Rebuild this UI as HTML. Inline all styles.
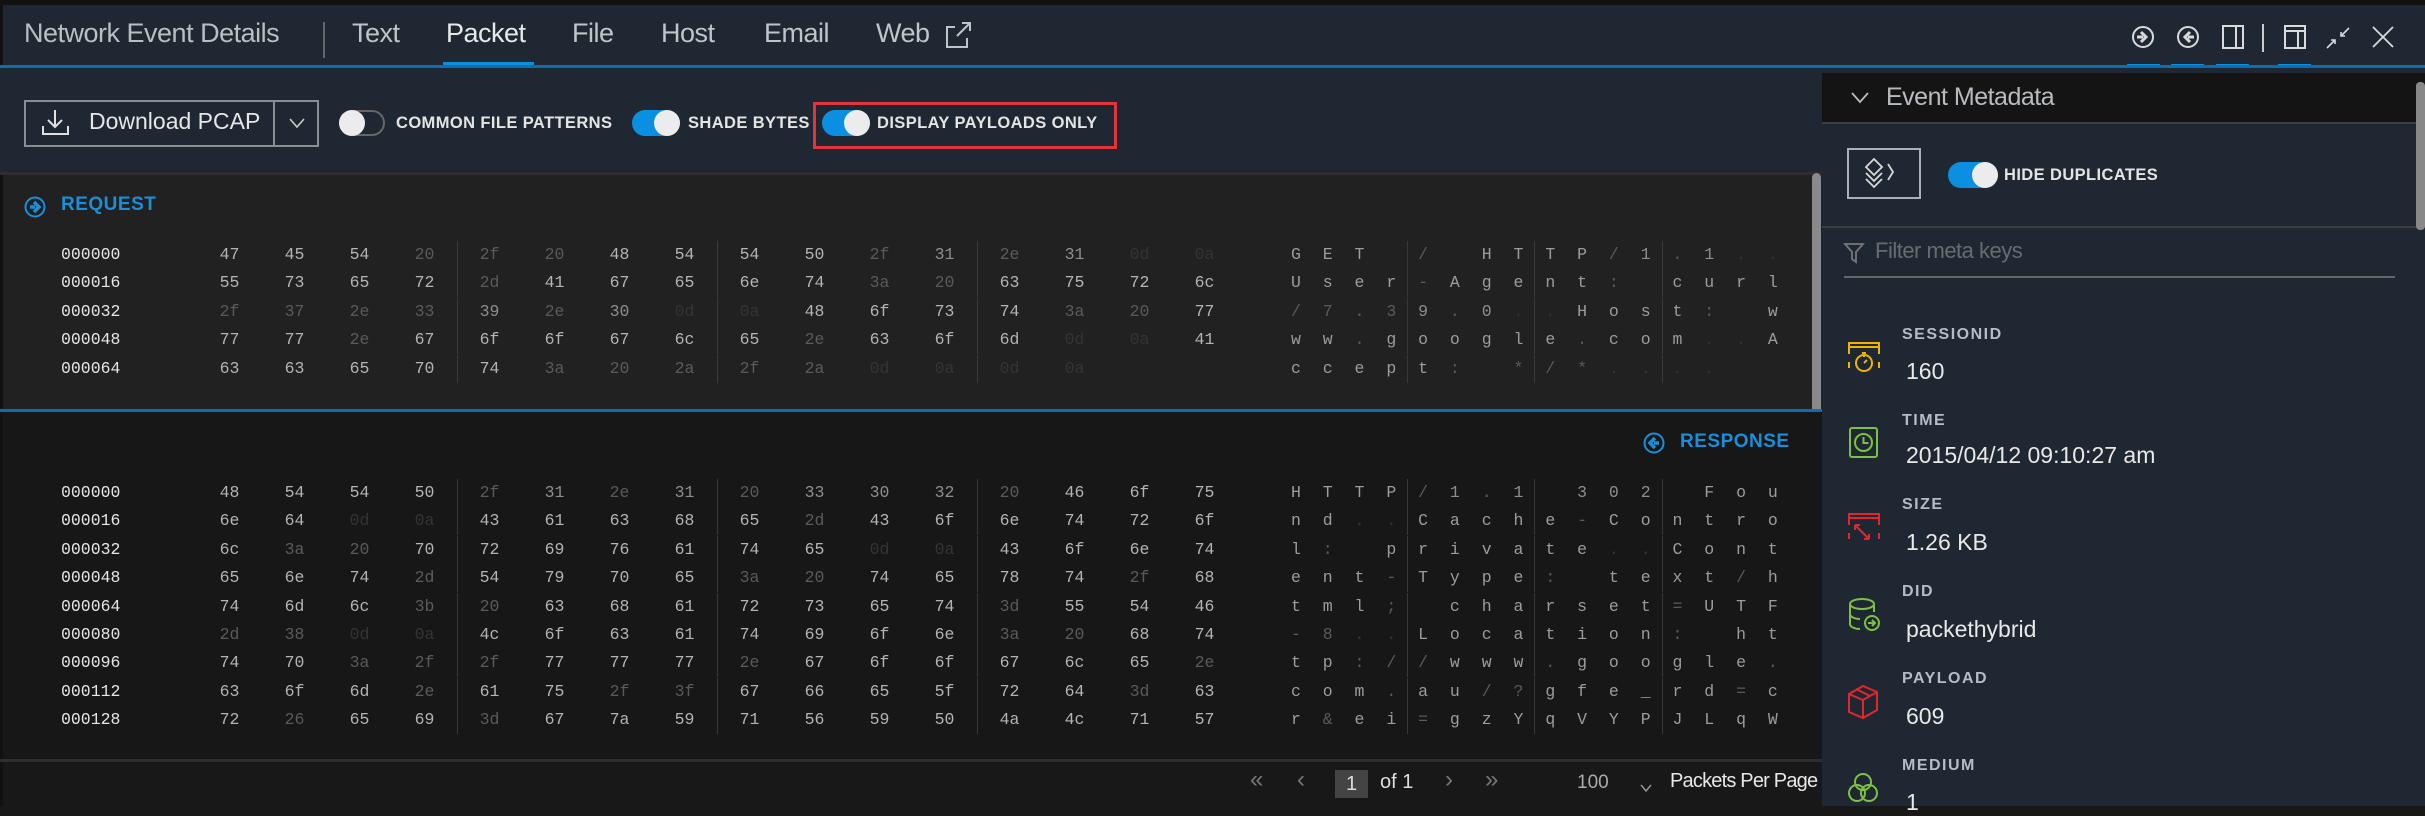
<!DOCTYPE html>
<html><head><meta charset="utf-8"><style>
*{margin:0;padding:0;box-sizing:border-box}
body{width:2425px;height:806px;background:#181818;position:relative;overflow:hidden;font-family:"Liberation Sans",sans-serif}
.abs{position:absolute}
#top{left:0;top:0;width:2425px;height:5px;background:#111}
#hdr{left:0;top:5px;width:2425px;height:61px;background:#1f2832}
#hline{left:0;top:65px;width:2425px;height:3px;background:#0a6fb0}
.tab{position:absolute;top:18px;font-size:27px;color:#bfc4c9;letter-spacing:-0.5px}
#tb{left:0;top:68px;width:1822px;height:104px;background:#1f2832}
#sep1{left:0;top:172px;width:1822px;height:3px;background:#2e2e2e}
#req{left:3px;top:175px;width:1819px;height:235px;background:#212121}
#rline{left:0;top:409px;width:1822px;height:3px;background:#0a6fb0}
#resp{left:3px;top:412px;width:1819px;height:348px;background:#171717}
#pline{left:0;top:759px;width:1822px;height:3px;background:#2e2e2e}
.lbl{position:absolute;font-weight:bold;font-size:16.5px;color:#e4e4e4;letter-spacing:0.4px}
.row{position:absolute;left:0;height:28px;display:flex;font-family:"Liberation Mono",monospace;font-size:16.5px;line-height:28px}
.off{width:197px;padding-left:61px;color:#e6e6e6}
.g{display:flex;width:260px;height:28px}
.g+.g{box-shadow:inset 1px 0 #383838}
.g i,.ag i{font-style:normal;text-align:center;display:block}
.g i{width:65px}
.a{margin-left:43px;display:flex}
.ag{display:flex;width:127.2px}
.ag+.ag{box-shadow:inset 1px 0 #383838}
.ag i{width:31.8px}
.b{color:#b4b4b4}.m{color:#8e8e8e}.d{color:#5a5a5a}.z{color:#343434}
.ag .b{color:#9c9c9c}
#rp{left:1822px;top:68px;width:603px;height:738px;background:#1f2832}
.mk{position:absolute;left:1902px;font-weight:bold;font-size:16px;color:#b5bcc4;letter-spacing:1.5px}
.mv{position:absolute;left:1906px;font-size:23px;color:#e8e8e8}
.ic{position:absolute;left:1846px}
</style></head><body>
<div class="abs" id="top"></div>
<div class="abs" id="hdr"></div>
<div class="abs" style="left:0;top:5px;width:3px;height:801px;background:#111"></div>
<div class="tab" style="left:24px;color:#b9bec3;">Network Event Details</div>
<div class="abs" style="left:323px;top:22px;width:2px;height:36px;background:#666"></div>
<div class="tab" style="left:352px">Text</div>
<div class="tab" style="left:446px;color:#e6e9ec">Packet</div>
<div class="tab" style="left:572px">File</div>
<div class="tab" style="left:661px">Host</div>
<div class="tab" style="left:764px">Email</div>
<div class="tab" style="left:876px">Web</div>
<svg class="abs" style="left:943px;top:20px" width="30" height="30" viewBox="0 0 30 30" fill="none" stroke="#bfc4c9" stroke-width="2"><path d="M12 7H4v20h20v-9"/><path d="M14 16L27 3M19 3h8v8"/></svg>
<div class="abs" style="left:443px;top:62px;width:91px;height:5px;background:#0b8fe0"></div>
<svg class="abs" style="left:2128px;top:24px" width="300" height="30" viewBox="0 0 300 30" fill="none" stroke="#d8dadc" stroke-width="2">
<circle cx="15" cy="13" r="10"/><path d="M9 13h6M13 8l5 5-5 5" stroke-width="3"/>
<circle cx="60" cy="13" r="10"/><path d="M66 13h-6M62 8l-5 5 5 5" stroke-width="3"/>
<rect x="95" y="2" width="20" height="22"/><path d="M108 2v22"/>
<path d="M135 -5v33" stroke="#ccc"/>
<rect x="157" y="2" width="20" height="22"/><path d="M157 7h20M170 7v17"/>
<path d="M199 24l8-8M203 16h4v4M221 4l-8 8M217 12h-4v-4" stroke-width="1.6"/>
<path d="M245 3l20 20M265 3l-20 20" stroke-width="1.8"/>
</svg>
<div class="abs" style="left:2127px;top:64px;width:33px;height:4px;background:#0b8fe0"></div>
<div class="abs" style="left:2171px;top:64px;width:33px;height:4px;background:#0b8fe0"></div>
<div class="abs" style="left:2216px;top:64px;width:33px;height:4px;background:#0b8fe0"></div>
<div class="abs" style="left:2278px;top:64px;width:33px;height:4px;background:#0b8fe0"></div>
<div class="abs" id="hline"></div>

<div class="abs" id="tb"></div>
<div class="abs" style="left:24px;top:100px;width:295px;height:47px;border:2px solid #8a8e92"></div>
<div class="abs" style="left:273px;top:100px;width:2px;height:47px;background:#8a8e92"></div>
<svg class="abs" style="left:40px;top:108px" width="34" height="30" viewBox="0 0 34 30" fill="none" stroke="#e0e0e0" stroke-width="2"><path d="M15 2v17M8 12l7 7 7-7"/><path d="M3 18v8h25v-8"/></svg>
<div class="abs" style="left:89px;top:108px;font-size:23px;color:#e6e6e6">Download PCAP</div>
<svg class="abs" style="left:287px;top:115px" width="20" height="16" viewBox="0 0 20 16" fill="none" stroke="#ccc" stroke-width="1.6"><path d="M3 4l7 8 7-8"/></svg>
<svg class="abs" style="left:339px;top:110px" width="46" height="26" viewBox="0 0 46 26"><rect x="1" y="1" width="44" height="24" rx="12" fill="#1f2832" stroke="#666" stroke-width="2"/><circle cx="13" cy="13" r="13" fill="#ececec"/></svg>
<div class="lbl" style="left:396px;top:114px">COMMON FILE PATTERNS</div>
<svg class="abs" style="left:632px;top:110px" width="48" height="26" viewBox="0 0 48 26"><rect x="0" y="0" width="48" height="26" rx="13" fill="#0b8fe0"/><circle cx="35" cy="13" r="13" fill="#ececec"/></svg>
<div class="lbl" style="left:688px;top:114px">SHADE BYTES</div>
<div class="abs" style="left:813px;top:102px;width:304px;height:47px;border:3px solid #e0353a"></div>
<svg class="abs" style="left:822px;top:110px" width="48" height="26" viewBox="0 0 48 26"><rect x="0" y="0" width="48" height="26" rx="13" fill="#0b8fe0"/><circle cx="35" cy="13" r="13" fill="#ececec"/></svg>
<div class="lbl" style="left:877px;top:114px">DISPLAY PAYLOADS ONLY</div>
<div class="abs" id="sep1"></div>

<div class="abs" id="req"></div>
<svg class="abs" style="left:24px;top:196px" width="22" height="22" viewBox="0 0 22 22"><circle cx="11" cy="11" r="9.5" fill="none" stroke="#1a8fd8" stroke-width="2"/><path d="M6 11h5M10 6l5 5-5 5" stroke="#1a8fd8" stroke-width="3.5" fill="none"/></svg>
<div class="abs" style="left:61px;top:194px;font-size:19px;font-weight:bold;color:#1a8fd8;letter-spacing:0.5px">REQUEST</div>

<div class="row" style="top:241px"><span class="off">000000</span><div class="g"><i class="b">47</i><i class="b">45</i><i class="b">54</i><i class="d">20</i></div><div class="g"><i class="d">2f</i><i class="d">20</i><i class="b">48</i><i class="b">54</i></div><div class="g"><i class="b">54</i><i class="b">50</i><i class="d">2f</i><i class="m">31</i></div><div class="g"><i class="d">2e</i><i class="m">31</i><i class="z">0d</i><i class="z">0a</i></div><div class="a"><div class="ag"><i class="b">G</i><i class="b">E</i><i class="b">T</i><i></i></div><div class="ag"><i class="d">/</i><i></i><i class="b">H</i><i class="b">T</i></div><div class="ag"><i class="b">T</i><i class="b">P</i><i class="d">/</i><i class="m">1</i></div><div class="ag"><i class="d">.</i><i class="m">1</i><i class="z">.</i><i class="z">.</i></div></div></div>
<div class="row" style="top:269.4px"><span class="off">000016</span><div class="g"><i class="b">55</i><i class="b">73</i><i class="b">65</i><i class="b">72</i></div><div class="g"><i class="d">2d</i><i class="b">41</i><i class="b">67</i><i class="b">65</i></div><div class="g"><i class="b">6e</i><i class="b">74</i><i class="d">3a</i><i class="d">20</i></div><div class="g"><i class="b">63</i><i class="b">75</i><i class="b">72</i><i class="b">6c</i></div><div class="a"><div class="ag"><i class="b">U</i><i class="b">s</i><i class="b">e</i><i class="b">r</i></div><div class="ag"><i class="d">-</i><i class="b">A</i><i class="b">g</i><i class="b">e</i></div><div class="ag"><i class="b">n</i><i class="b">t</i><i class="d">:</i><i></i></div><div class="ag"><i class="b">c</i><i class="b">u</i><i class="b">r</i><i class="b">l</i></div></div></div>
<div class="row" style="top:297.8px"><span class="off">000032</span><div class="g"><i class="d">2f</i><i class="d">37</i><i class="d">2e</i><i class="d">33</i></div><div class="g"><i class="m">39</i><i class="d">2e</i><i class="m">30</i><i class="z">0d</i></div><div class="g"><i class="z">0a</i><i class="b">48</i><i class="b">6f</i><i class="b">73</i></div><div class="g"><i class="b">74</i><i class="d">3a</i><i class="d">20</i><i class="b">77</i></div><div class="a"><div class="ag"><i class="d">/</i><i class="d">7</i><i class="d">.</i><i class="d">3</i></div><div class="ag"><i class="m">9</i><i class="d">.</i><i class="m">0</i><i class="z">.</i></div><div class="ag"><i class="z">.</i><i class="b">H</i><i class="b">o</i><i class="b">s</i></div><div class="ag"><i class="b">t</i><i class="d">:</i><i></i><i class="b">w</i></div></div></div>
<div class="row" style="top:326.2px"><span class="off">000048</span><div class="g"><i class="b">77</i><i class="b">77</i><i class="d">2e</i><i class="b">67</i></div><div class="g"><i class="b">6f</i><i class="b">6f</i><i class="b">67</i><i class="b">6c</i></div><div class="g"><i class="b">65</i><i class="d">2e</i><i class="b">63</i><i class="b">6f</i></div><div class="g"><i class="b">6d</i><i class="z">0d</i><i class="z">0a</i><i class="b">41</i></div><div class="a"><div class="ag"><i class="b">w</i><i class="b">w</i><i class="d">.</i><i class="b">g</i></div><div class="ag"><i class="b">o</i><i class="b">o</i><i class="b">g</i><i class="b">l</i></div><div class="ag"><i class="b">e</i><i class="d">.</i><i class="b">c</i><i class="b">o</i></div><div class="ag"><i class="b">m</i><i class="z">.</i><i class="z">.</i><i class="b">A</i></div></div></div>
<div class="row" style="top:354.6px"><span class="off">000064</span><div class="g"><i class="b">63</i><i class="b">63</i><i class="b">65</i><i class="b">70</i></div><div class="g"><i class="b">74</i><i class="d">3a</i><i class="d">20</i><i class="d">2a</i></div><div class="g"><i class="d">2f</i><i class="d">2a</i><i class="z">0d</i><i class="z">0a</i></div><div class="g"><i class="z">0d</i><i class="z">0a</i><i></i><i></i></div><div class="a"><div class="ag"><i class="b">c</i><i class="b">c</i><i class="b">e</i><i class="b">p</i></div><div class="ag"><i class="b">t</i><i class="d">:</i><i></i><i class="d">*</i></div><div class="ag"><i class="d">/</i><i class="d">*</i><i class="z">.</i><i class="z">.</i></div><div class="ag"><i class="z">.</i><i class="z">.</i><i></i><i></i></div></div></div>

<div class="abs" style="left:1812px;top:173px;width:9px;height:240px;border-radius:5px;background:#8a8a8a"></div>
<div class="abs" id="rline"></div>
<div class="abs" id="resp"></div>
<svg class="abs" style="left:1643px;top:432px" width="22" height="22" viewBox="0 0 22 22"><circle cx="11" cy="11" r="9.5" fill="none" stroke="#1a8fd8" stroke-width="2"/><path d="M16 11h-5M12 6l-5 5 5 5" stroke="#1a8fd8" stroke-width="3.5" fill="none"/></svg>
<div class="abs" style="left:1680px;top:431px;font-size:19px;font-weight:bold;color:#1a8fd8;letter-spacing:0.5px">RESPONSE</div>

<div class="row" style="top:479px"><span class="off">000000</span><div class="g"><i class="b">48</i><i class="b">54</i><i class="b">54</i><i class="b">50</i></div><div class="g"><i class="d">2f</i><i class="m">31</i><i class="d">2e</i><i class="m">31</i></div><div class="g"><i class="d">20</i><i class="m">33</i><i class="m">30</i><i class="m">32</i></div><div class="g"><i class="d">20</i><i class="b">46</i><i class="b">6f</i><i class="b">75</i></div><div class="a"><div class="ag"><i class="b">H</i><i class="b">T</i><i class="b">T</i><i class="b">P</i></div><div class="ag"><i class="d">/</i><i class="m">1</i><i class="d">.</i><i class="m">1</i></div><div class="ag"><i></i><i class="m">3</i><i class="m">0</i><i class="m">2</i></div><div class="ag"><i></i><i class="b">F</i><i class="b">o</i><i class="b">u</i></div></div></div>
<div class="row" style="top:507.4px"><span class="off">000016</span><div class="g"><i class="b">6e</i><i class="b">64</i><i class="z">0d</i><i class="z">0a</i></div><div class="g"><i class="b">43</i><i class="b">61</i><i class="b">63</i><i class="b">68</i></div><div class="g"><i class="b">65</i><i class="d">2d</i><i class="b">43</i><i class="b">6f</i></div><div class="g"><i class="b">6e</i><i class="b">74</i><i class="b">72</i><i class="b">6f</i></div><div class="a"><div class="ag"><i class="b">n</i><i class="b">d</i><i class="z">.</i><i class="z">.</i></div><div class="ag"><i class="b">C</i><i class="b">a</i><i class="b">c</i><i class="b">h</i></div><div class="ag"><i class="b">e</i><i class="d">-</i><i class="b">C</i><i class="b">o</i></div><div class="ag"><i class="b">n</i><i class="b">t</i><i class="b">r</i><i class="b">o</i></div></div></div>
<div class="row" style="top:535.8px"><span class="off">000032</span><div class="g"><i class="b">6c</i><i class="d">3a</i><i class="d">20</i><i class="b">70</i></div><div class="g"><i class="b">72</i><i class="b">69</i><i class="b">76</i><i class="b">61</i></div><div class="g"><i class="b">74</i><i class="b">65</i><i class="z">0d</i><i class="z">0a</i></div><div class="g"><i class="b">43</i><i class="b">6f</i><i class="b">6e</i><i class="b">74</i></div><div class="a"><div class="ag"><i class="b">l</i><i class="d">:</i><i></i><i class="b">p</i></div><div class="ag"><i class="b">r</i><i class="b">i</i><i class="b">v</i><i class="b">a</i></div><div class="ag"><i class="b">t</i><i class="b">e</i><i class="z">.</i><i class="z">.</i></div><div class="ag"><i class="b">C</i><i class="b">o</i><i class="b">n</i><i class="b">t</i></div></div></div>
<div class="row" style="top:564.2px"><span class="off">000048</span><div class="g"><i class="b">65</i><i class="b">6e</i><i class="b">74</i><i class="d">2d</i></div><div class="g"><i class="b">54</i><i class="b">79</i><i class="b">70</i><i class="b">65</i></div><div class="g"><i class="d">3a</i><i class="d">20</i><i class="b">74</i><i class="b">65</i></div><div class="g"><i class="b">78</i><i class="b">74</i><i class="d">2f</i><i class="b">68</i></div><div class="a"><div class="ag"><i class="b">e</i><i class="b">n</i><i class="b">t</i><i class="d">-</i></div><div class="ag"><i class="b">T</i><i class="b">y</i><i class="b">p</i><i class="b">e</i></div><div class="ag"><i class="d">:</i><i></i><i class="b">t</i><i class="b">e</i></div><div class="ag"><i class="b">x</i><i class="b">t</i><i class="d">/</i><i class="b">h</i></div></div></div>
<div class="row" style="top:592.6px"><span class="off">000064</span><div class="g"><i class="b">74</i><i class="b">6d</i><i class="b">6c</i><i class="d">3b</i></div><div class="g"><i class="d">20</i><i class="b">63</i><i class="b">68</i><i class="b">61</i></div><div class="g"><i class="b">72</i><i class="b">73</i><i class="b">65</i><i class="b">74</i></div><div class="g"><i class="d">3d</i><i class="b">55</i><i class="b">54</i><i class="b">46</i></div><div class="a"><div class="ag"><i class="b">t</i><i class="b">m</i><i class="b">l</i><i class="d">;</i></div><div class="ag"><i></i><i class="b">c</i><i class="b">h</i><i class="b">a</i></div><div class="ag"><i class="b">r</i><i class="b">s</i><i class="b">e</i><i class="b">t</i></div><div class="ag"><i class="d">=</i><i class="b">U</i><i class="b">T</i><i class="b">F</i></div></div></div>
<div class="row" style="top:621px"><span class="off">000080</span><div class="g"><i class="d">2d</i><i class="d">38</i><i class="z">0d</i><i class="z">0a</i></div><div class="g"><i class="b">4c</i><i class="b">6f</i><i class="b">63</i><i class="b">61</i></div><div class="g"><i class="b">74</i><i class="b">69</i><i class="b">6f</i><i class="b">6e</i></div><div class="g"><i class="d">3a</i><i class="d">20</i><i class="b">68</i><i class="b">74</i></div><div class="a"><div class="ag"><i class="d">-</i><i class="d">8</i><i class="z">.</i><i class="z">.</i></div><div class="ag"><i class="b">L</i><i class="b">o</i><i class="b">c</i><i class="b">a</i></div><div class="ag"><i class="b">t</i><i class="b">i</i><i class="b">o</i><i class="b">n</i></div><div class="ag"><i class="d">:</i><i></i><i class="b">h</i><i class="b">t</i></div></div></div>
<div class="row" style="top:649.4px"><span class="off">000096</span><div class="g"><i class="b">74</i><i class="b">70</i><i class="d">3a</i><i class="d">2f</i></div><div class="g"><i class="d">2f</i><i class="b">77</i><i class="b">77</i><i class="b">77</i></div><div class="g"><i class="d">2e</i><i class="b">67</i><i class="b">6f</i><i class="b">6f</i></div><div class="g"><i class="b">67</i><i class="b">6c</i><i class="b">65</i><i class="d">2e</i></div><div class="a"><div class="ag"><i class="b">t</i><i class="b">p</i><i class="d">:</i><i class="d">/</i></div><div class="ag"><i class="d">/</i><i class="b">w</i><i class="b">w</i><i class="b">w</i></div><div class="ag"><i class="d">.</i><i class="b">g</i><i class="b">o</i><i class="b">o</i></div><div class="ag"><i class="b">g</i><i class="b">l</i><i class="b">e</i><i class="d">.</i></div></div></div>
<div class="row" style="top:677.8px"><span class="off">000112</span><div class="g"><i class="b">63</i><i class="b">6f</i><i class="b">6d</i><i class="d">2e</i></div><div class="g"><i class="b">61</i><i class="b">75</i><i class="d">2f</i><i class="d">3f</i></div><div class="g"><i class="b">67</i><i class="b">66</i><i class="b">65</i><i class="b">5f</i></div><div class="g"><i class="b">72</i><i class="b">64</i><i class="d">3d</i><i class="b">63</i></div><div class="a"><div class="ag"><i class="b">c</i><i class="b">o</i><i class="b">m</i><i class="d">.</i></div><div class="ag"><i class="b">a</i><i class="b">u</i><i class="d">/</i><i class="d">?</i></div><div class="ag"><i class="b">g</i><i class="b">f</i><i class="b">e</i><i class="b">_</i></div><div class="ag"><i class="b">r</i><i class="b">d</i><i class="d">=</i><i class="b">c</i></div></div></div>
<div class="row" style="top:706.2px"><span class="off">000128</span><div class="g"><i class="b">72</i><i class="d">26</i><i class="b">65</i><i class="b">69</i></div><div class="g"><i class="d">3d</i><i class="b">67</i><i class="b">7a</i><i class="b">59</i></div><div class="g"><i class="b">71</i><i class="b">56</i><i class="b">59</i><i class="b">50</i></div><div class="g"><i class="b">4a</i><i class="b">4c</i><i class="b">71</i><i class="b">57</i></div><div class="a"><div class="ag"><i class="b">r</i><i class="d">&amp;</i><i class="b">e</i><i class="b">i</i></div><div class="ag"><i class="d">=</i><i class="b">g</i><i class="b">z</i><i class="b">Y</i></div><div class="ag"><i class="b">q</i><i class="b">V</i><i class="b">Y</i><i class="b">P</i></div><div class="ag"><i class="b">J</i><i class="b">L</i><i class="b">q</i><i class="b">W</i></div></div></div>

<div class="abs" id="pline"></div>
<div class="abs" style="left:1250px;top:766px;font-size:24px;color:#777">«</div>
<div class="abs" style="left:1297px;top:766px;font-size:24px;color:#777">‹</div>
<div class="abs" style="left:1335px;top:770px;width:33px;height:28px;background:#444;color:#ddd;font-size:20px;text-align:center;line-height:28px">1</div>
<div class="abs" style="left:1380px;top:771px;font-size:20px;color:#ddd">of 1</div>
<div class="abs" style="left:1445px;top:766px;font-size:24px;color:#777">›</div>
<div class="abs" style="left:1485px;top:766px;font-size:24px;color:#777">»</div>
<div class="abs" style="left:1577px;top:772px;font-size:19px;color:#aaa">100</div>
<svg class="abs" style="left:1639px;top:783px" width="14" height="10" viewBox="0 0 14 10" fill="none" stroke="#999" stroke-width="1.4"><path d="M2 2l5 6 5-6"/></svg>
<div class="abs" style="left:1670px;top:770px;font-size:20px;color:#e8e8e8;letter-spacing:-0.8px">Packets Per Page</div>

<div class="abs" id="rp"></div>
<div class="abs" style="left:1822px;top:73px;width:603px;height:49px;background:#141414"></div>
<div class="abs" style="left:1822px;top:122px;width:603px;height:2px;background:#3a3f44"></div>
<svg class="abs" style="left:1849px;top:90px" width="22" height="16" viewBox="0 0 22 16" fill="none" stroke="#bbb" stroke-width="1.8"><path d="M3 3l8 9 8-9"/></svg>
<div class="abs" style="left:1886px;top:83px;font-size:25px;color:#b8bcc0;letter-spacing:-0.5px">Event Metadata</div>
<div class="abs" style="left:1847px;top:148px;width:74px;height:51px;border:2px solid #aab0b5"></div>
<svg class="abs" style="left:1862px;top:156px" width="44" height="36" viewBox="0 0 44 36" fill="none" stroke="#d8d8d8" stroke-width="1.8"><path d="M12 3l8 8-8 8-8-8z"/><path d="M4 17l8 8 8-8M4 23l8 8 8-8"/><path d="M26 8l5 8-5 8"/></svg>
<svg class="abs" style="left:1948px;top:162px" width="50" height="26" viewBox="0 0 50 26"><rect x="0" y="0" width="50" height="26" rx="13" fill="#0b8fe0"/><circle cx="37" cy="13" r="13" fill="#ececec"/></svg>
<div class="lbl" style="left:2004px;top:166px">HIDE DUPLICATES</div>
<div class="abs" style="left:1822px;top:226px;width:603px;height:2px;background:#3a3f44"></div>
<div class="abs" style="left:2416px;top:82px;width:9px;height:148px;border-radius:4px;background:#888"></div>
<svg class="abs" style="left:1843px;top:242px" width="24" height="22" viewBox="0 0 24 22" fill="none" stroke="#777" stroke-width="1.8"><path d="M2 2h18l-7 8v10l-4-3v-7z"/></svg>
<div class="abs" style="left:1875px;top:238px;font-size:22px;color:#676c71;letter-spacing:-0.5px">Filter meta keys</div>
<div class="abs" style="left:1844px;top:276px;width:551px;height:2px;background:#666"></div>

<svg class="ic" style="top:340px" width="36" height="34" viewBox="0 0 36 34" fill="none" stroke="#f0b400" stroke-width="2"><path d="M3 14V3h30v11M3 22v6M33 22v6M3 7h30"/><circle cx="18" cy="23" r="8"/><path d="M16 13h4M18 15v2M18 23l3-3"/></svg>
<div class="mk" style="top:326px">SESSIONID</div><div class="mv" style="top:358px">160</div>
<svg class="ic" style="top:426px" width="36" height="34" viewBox="0 0 36 34" fill="none" stroke="#7cc142" stroke-width="2"><rect x="4" y="2" width="27" height="29" rx="2"/><circle cx="17.5" cy="16.5" r="8.5"/><path d="M17.5 11v6h5"/></svg>
<div class="mk" style="top:412px">TIME</div><div class="mv" style="top:442px">2015/04/12 09:10:27 am</div>
<svg class="ic" style="top:511px" width="36" height="34" viewBox="0 0 36 34" fill="none" stroke="#e3262c" stroke-width="2"><path d="M3 14V3h30v11M3 22v6M33 22v6M3 7h30M9 14l14 14M9 14h5M9 14v5M23 28h-5M23 28v-5"/></svg>
<div class="mk" style="top:496px">SIZE</div><div class="mv" style="top:529px">1.26 KB</div>
<svg class="ic" style="top:597px" width="36" height="36" viewBox="0 0 36 36" fill="none" stroke="#7cc142" stroke-width="2"><ellipse cx="16" cy="7" rx="12" ry="5"/><path d="M4 7v20c0 3 5 5 10 5M28 7v8M4 17c0 3 5 5 10 5"/><circle cx="26" cy="26" r="7"/><path d="M22 26h7M26 23l3 3-3 3"/></svg>
<div class="mk" style="top:583px">DID</div><div class="mv" style="top:616px">packethybrid</div>
<svg class="ic" style="top:684px" width="36" height="36" viewBox="0 0 36 36" fill="none" stroke="#e3262c" stroke-width="2"><path d="M17 2l14 6v18l-14 8-14-6V10z"/><path d="M3 10l14 6 14-8M17 16v18M10 5l14 7"/></svg>
<div class="mk" style="top:670px">PAYLOAD</div><div class="mv" style="top:703px">609</div>
<svg class="ic" style="top:772px" width="36" height="34" viewBox="0 0 36 34" fill="none" stroke="#7cc142" stroke-width="2"><circle cx="17" cy="10" r="8"/><circle cx="11" cy="21" r="8"/><circle cx="23" cy="21" r="8"/></svg>
<div class="mk" style="top:757px">MEDIUM</div><div class="mv" style="top:789px">1</div>
</body></html>
